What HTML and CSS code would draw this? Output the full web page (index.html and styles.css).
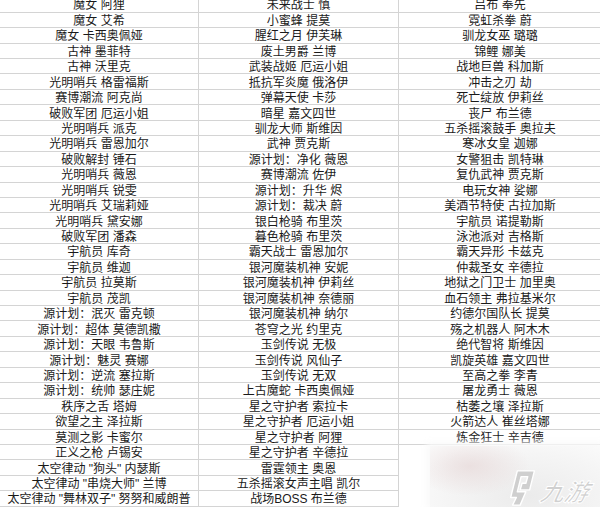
FILE: index.html
```html
<!DOCTYPE html>
<html lang="zh-CN">
<head>
<meta charset="utf-8">
<title>皮肤列表</title>
<link rel="stylesheet" href="styles.css">
</head>
<body>
<div class="sheet">
  <div class="col c1">
    <div class="cell">魔女 阿狸</div>
    <div class="cell">魔女 艾希</div>
    <div class="cell">魔女 卡西奥佩娅</div>
    <div class="cell">古神 墨菲特</div>
    <div class="cell">古神 沃里克</div>
    <div class="cell">光明哨兵 格雷福斯</div>
    <div class="cell">赛博潮流 阿克尚</div>
    <div class="cell">破败军团 厄运小姐</div>
    <div class="cell">光明哨兵 派克</div>
    <div class="cell">光明哨兵 雷恩加尔</div>
    <div class="cell">破败解封 锤石</div>
    <div class="cell">光明哨兵 薇恩</div>
    <div class="cell">光明哨兵 锐雯</div>
    <div class="cell">光明哨兵 艾瑞莉娅</div>
    <div class="cell">光明哨兵 黛安娜</div>
    <div class="cell">破败军团 潘森</div>
    <div class="cell">宇航员 库奇</div>
    <div class="cell">宇航员 维迦</div>
    <div class="cell">宇航员 拉莫斯</div>
    <div class="cell">宇航员 茂凯</div>
    <div class="cell">源计划：泯灭 雷克顿</div>
    <div class="cell">源计划：超体 莫德凯撒</div>
    <div class="cell">源计划：天眼 韦鲁斯</div>
    <div class="cell">源计划：魅灵 赛娜</div>
    <div class="cell">源计划：逆流 塞拉斯</div>
    <div class="cell">源计划：统帅 瑟庄妮</div>
    <div class="cell">秩序之舌 塔姆</div>
    <div class="cell">欲望之主 泽拉斯</div>
    <div class="cell">莫测之影 卡蜜尔</div>
    <div class="cell">正义之枪 卢锡安</div>
    <div class="cell">太空律动 "狗头" 内瑟斯</div>
    <div class="cell">太空律动 "串烧大师" 兰博</div>
    <div class="cell">太空律动 "舞林双子" 努努和威朗普</div>
  </div>
  <div class="col c2">
    <div class="cell">未来战士 慎</div>
    <div class="cell">小蜜蜂 提莫</div>
    <div class="cell">腥红之月 伊芙琳</div>
    <div class="cell">废土男爵 兰博</div>
    <div class="cell">武装战姬 厄运小姐</div>
    <div class="cell">抵抗军炎魔 俄洛伊</div>
    <div class="cell">弹幕天使 卡莎</div>
    <div class="cell">暗星 嘉文四世</div>
    <div class="cell">驯龙大师 斯维因</div>
    <div class="cell">武神 贾克斯</div>
    <div class="cell">源计划：净化 薇恩</div>
    <div class="cell">赛博潮流 佐伊</div>
    <div class="cell">源计划：升华 烬</div>
    <div class="cell">源计划：裁决 蔚</div>
    <div class="cell">银白枪骑 布里茨</div>
    <div class="cell">暮色枪骑 布里茨</div>
    <div class="cell">霸天战士 雷恩加尔</div>
    <div class="cell">银河魔装机神 安妮</div>
    <div class="cell">银河魔装机神 伊莉丝</div>
    <div class="cell">银河魔装机神 奈德丽</div>
    <div class="cell">银河魔装机神 纳尔</div>
    <div class="cell">苍穹之光 约里克</div>
    <div class="cell">玉剑传说 无极</div>
    <div class="cell">玉剑传说 风仙子</div>
    <div class="cell">玉剑传说 无双</div>
    <div class="cell">上古魔蛇 卡西奥佩娅</div>
    <div class="cell">星之守护者 索拉卡</div>
    <div class="cell">星之守护者 厄运小姐</div>
    <div class="cell">星之守护者 阿狸</div>
    <div class="cell">星之守护者 辛德拉</div>
    <div class="cell">雷霆领主 奥恩</div>
    <div class="cell">五杀摇滚女声主唱 凯尔</div>
    <div class="cell">战场BOSS 布兰德</div>
  </div>
  <div class="col c3">
    <div class="cell">吕布 奉先</div>
    <div class="cell">霓虹杀拳 蔚</div>
    <div class="cell">驯龙女巫 璐璐</div>
    <div class="cell">锦鲤 娜美</div>
    <div class="cell">战地巨兽 科加斯</div>
    <div class="cell">冲击之刃 劫</div>
    <div class="cell">死亡绽放 伊莉丝</div>
    <div class="cell">丧尸 布兰德</div>
    <div class="cell">五杀摇滚鼓手 奥拉夫</div>
    <div class="cell">寒冰女皇 迦娜</div>
    <div class="cell">女警狙击 凯特琳</div>
    <div class="cell">复仇武神 贾克斯</div>
    <div class="cell">电玩女神 娑娜</div>
    <div class="cell">美酒节特使 古拉加斯</div>
    <div class="cell">宇航员 诺提勒斯</div>
    <div class="cell">泳池派对 吉格斯</div>
    <div class="cell">霸天异形 卡兹克</div>
    <div class="cell">仲裁圣女 辛德拉</div>
    <div class="cell">地狱之门卫士 加里奥</div>
    <div class="cell">血石领主 弗拉基米尔</div>
    <div class="cell">约德尔国队长 提莫</div>
    <div class="cell">殇之机器人 阿木木</div>
    <div class="cell">绝代智将 斯维因</div>
    <div class="cell">凯旋英雄 嘉文四世</div>
    <div class="cell">至高之拳 李青</div>
    <div class="cell">屠龙勇士 薇恩</div>
    <div class="cell">枯萎之壤 泽拉斯</div>
    <div class="cell">火箭达人 崔丝塔娜</div>
    <div class="cell">炼金狂士 辛吉德</div>
  </div>
</div>
<div class="watermark">
  <svg class="wm-logo" viewBox="0 0 30 40" width="30" height="38" aria-hidden="true">
    <path d="M9 2 L27 2 L22 22 L12 22 L14 15 L18 15 L20 8 L13 8 L9 24 L18 24 L12 38 L4 38 L8 30 L2 30 Z" fill="#cfcfcf" stroke="#ffffff" stroke-width="1.5" stroke-linejoin="round"/>
  </svg>
  <span class="wm-text">九游</span>
</div>
</body>
</html>
```
FILE: styles.css
```css
html, body {
  margin: 0;
  padding: 0;
  background: #ffffff;
  overflow: hidden;
}

body {
  width: 600px;
  height: 507px;
  position: relative;
  font-family: "Liberation Sans", "Noto Sans CJK SC", sans-serif;
  font-size: 12px;
  color: #1a1a1a;
}

.sheet {
  display: flex;
  margin-top: -2.75px;
}

.col {
  display: flex;
  flex-direction: column;
  flex: none;
}

.c1 {
  width: 198px;
  border-right: 1px solid #d4d4d4;
}

.c2 {
  width: 199px;
  border-right: 1px solid #d4d4d4;
}

.c3 {
  width: 202px;
}

.cell {
  box-sizing: border-box;
  height: 15.45px;
  border-bottom: 1px solid #d4d4d4;
  display: flex;
  align-items: center;
  justify-content: center;
  white-space: nowrap;
  line-height: 14px;
  padding-top: 2px;
}

.watermark {
  position: absolute;
  left: 430px;
  top: 446px;
  width: 170px;
  height: 61px;
  display: flex;
  align-items: flex-end;
  justify-content: flex-end;
  gap: 3px;
  padding-right: 11px;
  box-sizing: border-box;
  background:
    radial-gradient(ellipse 60px 30px at 40px 20px, rgba(230, 215, 215, 0.7), rgba(255, 255, 255, 0) 100%),
    radial-gradient(ellipse 120px 60px at 100px 50px, #ebebeb, #f5f5f5 70%, #fafafa 100%);
  box-shadow: 0 0 6px 4px rgba(250, 250, 250, 0.9);
}

.wm-logo {
  display: block;
}

.wm-text {
  font-family: "Noto Sans CJK SC", sans-serif;
  font-size: 24px;
  font-weight: 700;
  font-style: italic;
  color: #d0d0d0;
  line-height: 28px;
  margin-bottom: 2px;
  -webkit-text-stroke: 1px #ffffff;
  transform: skewX(-12deg);
}
```
